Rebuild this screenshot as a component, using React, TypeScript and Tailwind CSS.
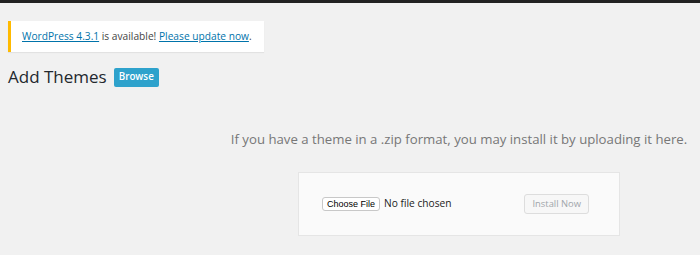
import React from "react";

export default function App() {
  return (
    <div
      className="w-[700px] h-[255px] overflow-hidden bg-[#f1f1f1] text-[#444]"
      style={{ fontFamily: '"Open Sans", "Liberation Sans", sans-serif' }}
    >
      <div className="h-[3px] bg-[#222]" />
      <div className="ml-[8px] mt-[18px] flex h-[31px] w-[256px] items-center border-l-[3px] border-[#ffba00] bg-white pl-[11px] text-[10.2px] shadow-[0_1px_1px_rgba(0,0,0,0.06)]">
        <span className="whitespace-nowrap">
          <a href="#" className="text-[#0073aa] underline">WordPress 4.3.1</a> is available!{" "}
          <a href="#" className="text-[#0073aa] underline">Please update now</a>.
        </span>
      </div>
      <div className="ml-[8px] mt-[13px] flex items-center gap-[7px]">
        <h1 className="text-[17px] leading-[24px] text-[#23282d]">Add Themes</h1>
        <button className="h-[19px] rounded-[2px] bg-[#2ea2cc] px-[5px] text-[9.8px] font-semibold text-white">
          Browse
        </button>
      </div>
      <div className="w-[918px]">
        <p className="mt-[40px] whitespace-nowrap text-center text-[13.2px] leading-[20px] text-[#777]">
          If you have a theme in a .zip format, you may install it by uploading it here.
        </p>
        <div className="mx-auto mt-[23px] flex h-[64px] w-[322px] items-center border border-[#e5e5e5] bg-[#fafafa] pl-[23px] pr-[30px]">
          <button
            className="h-[14px] rounded-[3px] border border-[#c8c8c8] bg-white px-[4px] text-[9px] leading-[12px] text-black"
            style={{ fontFamily: '"Liberation Sans", Arial, sans-serif' }}
          >
            Choose File
          </button>
          <span className="ml-[4px] text-[10.2px] text-[#222]">No file chosen</span>
          <button className="ml-auto h-[20px] rounded-[3px] border border-[#ddd] bg-[#f7f7f7] px-[7px] text-[9.4px] text-[#a0a5aa]">
            Install Now
          </button>
        </div>
      </div>
    </div>
  );
}
